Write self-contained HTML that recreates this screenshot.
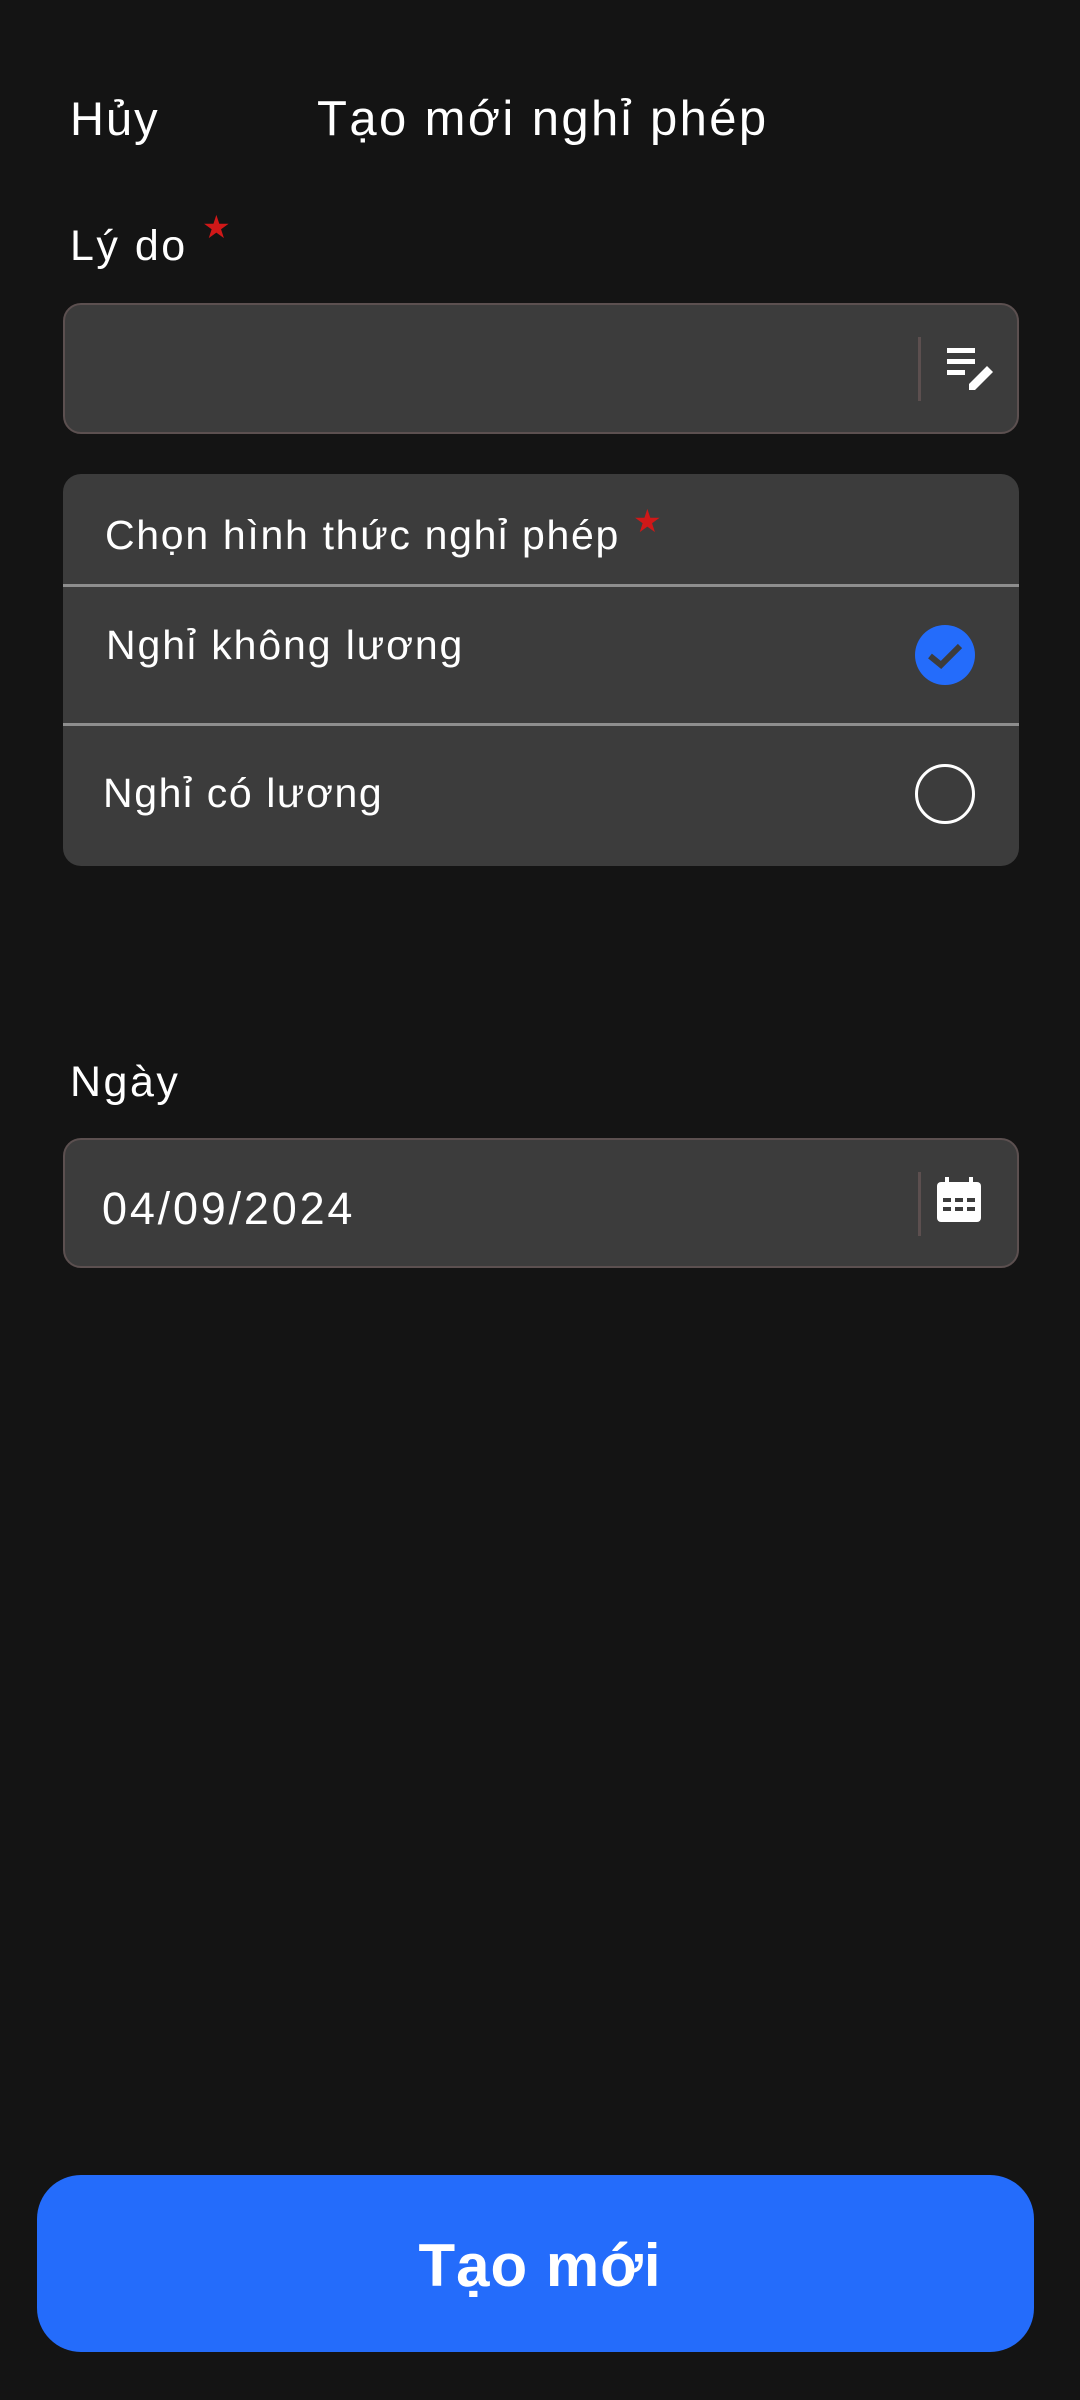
<!DOCTYPE html>
<html><head><meta charset="utf-8"><style>
*{margin:0;padding:0;box-sizing:border-box}
body{width:1080px;height:2400px;background:#141414;position:relative;overflow:hidden;font-family:"Liberation Sans","DejaVu Sans",sans-serif;color:#fff}
.t{position:absolute;white-space:nowrap;line-height:1}
.star{color:#d01818;position:absolute;font-size:32px}
.box{position:absolute;left:63px;width:956px;background:#3c3c3c;border:2px solid #5c5050;border-radius:18px}
.div{position:absolute;left:918px;width:3px;background:#5c4f4f}
.card{position:absolute;left:63px;top:474px;width:956px;height:392px;background:#3c3c3c;border-radius:18px;overflow:hidden}
.hl{position:absolute;left:0;width:100%;height:3px;background:#8e8e8e}
</style></head><body>
<div class="t" style="left:70px;top:95px;font-size:47px;letter-spacing:2px">Hủy</div>
<div class="t" style="left:317px;top:95px;font-size:49px;letter-spacing:2.4px">Tạo mới nghỉ phép</div>

<div class="t" style="left:70px;top:225px;font-size:43px;letter-spacing:2.5px">Lý do</div>
<div class="star" style="left:202px;top:208px">★</div>
<div class="box" style="top:303px;height:131px"></div>
<div class="div" style="top:337px;height:64px"></div>
<svg style="position:absolute;left:945px;top:346px" width="52" height="48" viewBox="0 0 52 48">
<rect x="2" y="2" width="28" height="5" fill="#fff"/><rect x="2" y="13" width="28" height="5" fill="#fff"/><rect x="2" y="24" width="18" height="5" fill="#fff"/>
<path d="M24 44 L24 38 L42 20 L48 26 L30 44 Z" fill="#fff"/></svg>

<div class="card">
<div class="t" style="left:42px;top:41px;font-size:41px;letter-spacing:1.7px">Chọn hình thức nghỉ phép</div>
<div class="star" style="left:570px;top:28px">★</div>
<div class="hl" style="top:110px"></div>
<div class="t" style="left:43px;top:151px;font-size:41px;letter-spacing:1.9px">Nghỉ không lương</div>
<div class="hl" style="top:249px"></div>
<div class="t" style="left:40px;top:299px;font-size:41px;letter-spacing:1.6px">Nghỉ có lương</div>
</div>
<svg style="position:absolute;left:914px;top:624px" width="62" height="62" viewBox="0 0 62 62">
<circle cx="31" cy="31" r="30" fill="#246cfb"/><path d="M16 32 L27 41 L46 22" stroke="#3c3c3c" stroke-width="6" fill="none"/></svg>
<svg style="position:absolute;left:914px;top:763px" width="62" height="62" viewBox="0 0 62 62">
<circle cx="31" cy="31" r="28.5" fill="none" stroke="#fff" stroke-width="3"/></svg>

<div class="t" style="left:70px;top:1061px;font-size:43px;letter-spacing:2.5px">Ngày</div>
<div class="box" style="top:1138px;height:130px"></div>
<div class="div" style="top:1172px;height:64px"></div>
<div class="t" style="left:102px;top:1186px;font-size:45px;letter-spacing:2.8px">04/09/2024</div>
<svg style="position:absolute;left:935px;top:1176px" width="48" height="48" viewBox="0 0 48 48">
<rect x="2" y="6" width="44" height="40" rx="4" fill="#fff"/><rect x="10" y="1" width="4" height="8" fill="#fff"/><rect x="34" y="1" width="4" height="8" fill="#fff"/>
<g fill="#3c3c3c"><rect x="8" y="22" width="8" height="4"/><rect x="20" y="22" width="8" height="4"/><rect x="32" y="22" width="8" height="4"/><rect x="8" y="31" width="8" height="4"/><rect x="20" y="31" width="8" height="4"/><rect x="32" y="31" width="8" height="4"/></g></svg>

<div style="position:absolute;left:37px;top:2175px;width:997px;height:177px;background:#246cfb;border-radius:44px"></div>
<div class="t" style="left:0;width:1080px;text-align:center;top:2236px;font-size:60px;font-weight:bold;letter-spacing:1px">Tạo mới</div>
</body></html>
